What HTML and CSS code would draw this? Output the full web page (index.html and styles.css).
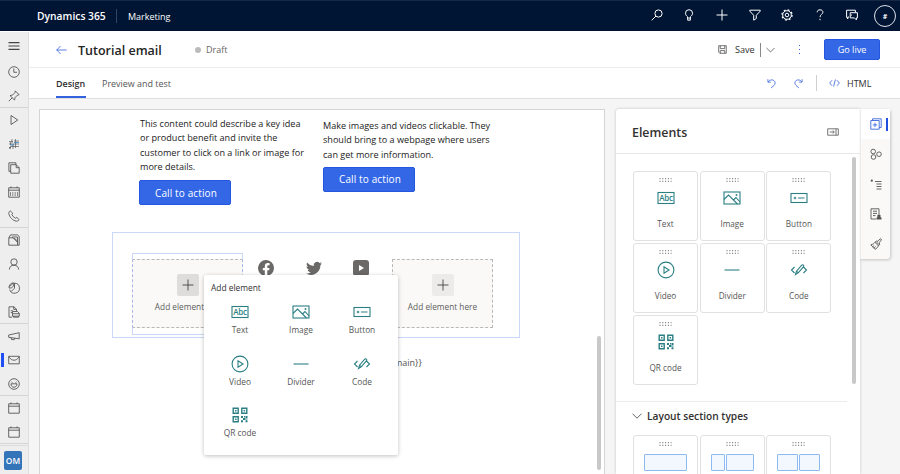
FILE: index.html
```html
<!DOCTYPE html>
<html lang="en">
<head>
<meta charset="utf-8">
<title>Tutorial email - Marketing</title>
<link rel="stylesheet" href="styles.css">
</head>
<body>
<svg class="defs" width="0" height="0">
  <symbol id="i-text" viewBox="0 0 18 14"><rect x="1" y="1.5" width="16" height="11"/><text x="9" y="10" text-anchor="middle" class="abc">Abc</text></symbol>
  <symbol id="i-image" viewBox="0 0 18 14"><rect x="1" y="1" width="16" height="12"/><path d="M1 8.500l4.500-4.500 9 9M10.500 9l2.500-2.500 4 4.500"/><circle cx="13.500" cy="4" r=".4"/></symbol>
  <symbol id="i-button" viewBox="0 0 18 14"><rect x="1" y="2.500" width="16" height="9"/><path d="M8 7h6.500M3.700 7h2.600M5 5.700v2.600"/></symbol>
  <symbol id="i-video" viewBox="0 0 18 18"><circle cx="9" cy="9" r="7.900"/><path d="M7 5.800v6.400L12 9z"/></symbol>
  <symbol id="i-divider" viewBox="0 0 18 14"><path d="M1.500 7h15"/></symbol>
  <symbol id="i-code" viewBox="0 0 18 14"><path d="M4.500 4L1.500 7l3 3M13.500 4l3 3-3 3M5.500 11.500l1-3.300 5.200-6c1.200-1 2.700.3 1.700 1.700l-5.200 6zM6.500 8.200l1.800 1.600"/></symbol>
  <symbol id="i-qr" viewBox="0 0 16 16"><path d="M1.200 1.200h5v5h-5zM9.800 1.200h5v5h-5zM1.200 9.800h5v5h-5z" class="w14"/><path class="f" d="M3 3h1.500v1.500H3zM11.600 3h1.500v1.500h-1.500zM3 11.600h1.500v1.500H3zM9 9h2v2H9zM13.500 9h2v2h-2zM11 11h2.500v2H11zM9 13.300h2v2H9zM13.500 13.300h2v2h-2zM12 9h1v1.500h-1zM14 11.500h1.500v1H14z"/></symbol>
  <symbol id="i-cal" viewBox="0 0 12 12"><path d="M.7 1.800h10.600v9.400H.7zM.7 4.200h10.600M3 .5v1.500M9 .5v1.500"/></symbol>
  <symbol id="i-grip" viewBox="0 0 14 6"><path d="M.5 1.500h13M.5 4.500h13"/></symbol>
  <symbol id="i-plus" viewBox="0 0 12 12"><path d="M6 .5v11M.5 6h11"/></symbol>
  <symbol id="i-chev" viewBox="0 0 10 6"><path d="M.5.700L5 5.200 9.500.700"/></symbol>
</svg>

<header class="topbar">
  <strong class="product">Dynamics 365</strong>
  <span class="app">Marketing</span>
  <nav class="tools">
    <svg viewBox="0 0 12 12"><circle cx="7.500" cy="4.500" r="3.600"/><path d="M5 7L.7 11.300"/></svg>
    <svg viewBox="0 0 12 12"><path d="M4.500 9V7.700C3.500 6.700 2.500 6 2.500 4.200a3.500 3.500 0 017 0c0 1.800-1 2.500-2 3.500V9zM4.700 9v2.200h2.600V9"/></svg>
    <svg viewBox="0 0 12 12"><use href="#i-plus"/></svg>
    <svg viewBox="0 0 12 12"><path d="M.8 1.200h10.400v.9L7.300 6.300v3.200l-2.600 1.700V6.300L.8 2.100z"/></svg>
    <svg viewBox="0 0 12 12"><circle cx="6" cy="6" r="4.300"/><circle cx="6" cy="6" r="1.800"/><circle class="teeth" cx="6" cy="6" r="5.100"/></svg>
    <svg viewBox="0 0 12 12"><path d="M3.200 3.300C3.200 1.600 4.300.8 6 .8s2.900 1 2.900 2.400C8.900 5.200 6 5.500 6 8.200M6 9.800v1.400"/></svg>
    <svg viewBox="0 0 12 12"><path d="M3 8H1.800v2L.6 8V1.200h8.800v2M4.200 3.700h7.200v5.200h-1v2l-2-2H4.200zM6 5.600L4.500 7"/></svg>
    <span class="avatar">#</span>
  </nav>
</header>

<div class="app-body">
  <aside class="sidebar">
    <div class="item first"><svg viewBox="0 0 12 12"><path d="M.5 2.700h11M.5 6h11M.5 9.300h11" class="bold"/></svg></div>
    <div class="item"><svg viewBox="0 0 12 12"><circle cx="6" cy="6" r="5.300"/><path d="M5.800 2.500v3.800H9"/></svg></div>
    <div class="item end"><svg viewBox="0 0 12 12"><path d="M.8 11.200l3.400-3.400M2 5.600l4.500 4.400.6-2.500 2.400-2.400 1.600-.3L7.300.9 7 2.600 4.600 5z"/></svg></div>
    <div class="item"><svg viewBox="0 0 12 12"><path d="M3 1.500v9L9.800 6z"/></svg></div>
    <div class="item"><svg viewBox="0 0 12 12"><path class="faint" d="M1 3.500h4M6 3h5M1 6h10M2 8.500h9M4 1v4M7.500 1v9M5 6v5M2.500 4v3"/><path class="accent" d="M6 4.500h5M2 7h4"/><path d="M1 9.800h2" class="bold"/></svg></div>
    <div class="item"><svg viewBox="0 0 12 12"><path d="M2.500 9.300H.9V.8h7v1.700M2.700 2.700h5.500l3 3v5.500H2.700zM8.200 2.700v3h3"/></svg></div>
    <div class="item"><svg viewBox="0 0 12 12"><use href="#i-cal"/><path d="M2.500 6v4M4.800 6v4M7.200 6v4M9.500 6v4" class="faint"/></svg></div>
    <div class="item end"><svg viewBox="0 0 12 12"><path d="M2.300.9c-1 .4-1.600 1.300-1.500 2.500.4 3.500 4 7.300 7.600 7.800 1.200 0 2-.5 2.700-1.600L8.800 7.400l-1.300.9c-1.600-.8-2.700-2-3.600-3.700l.8-1.400z"/></svg></div>
    <div class="item"><svg viewBox="0 0 12 12"><path d="M.8 3.800l1.700-2.900h7l1.700 1.500v8.800H.8zM1 3.800h4l4.500 4.500M4 3h5.500v8M6 4l3.500 3"/></svg></div>
    <div class="item"><svg viewBox="0 0 12 12"><circle cx="6" cy="4" r="3.200"/><path d="M1.400 11.500c0-2.800 2-4.300 4.600-4.300s4.600 1.500 4.600 4.300"/></svg></div>
    <div class="item"><svg viewBox="0 0 12 12"><path d="M6.500 1.200a5 5 0 11-4.800 6.500M1 6C.8 3 3 .8 5.700.8V4L3.200 6zM6.500 1.200v5L3 9.700M1.500 4.500L5 1.500"/></svg></div>
    <div class="item end"><svg viewBox="0 0 12 12"><path d="M4 11.200H1V.8h5l2.500 2.400V5M5.700.8v2.600h2.800M2.800 4.700h2M2.800 6.600h1.500M4.500 5.500h5l1.800 1.700v3H4.500zM5.500 10.200v1h5v-1M5 7.700h6"/></svg></div>
    <div class="item"><svg viewBox="0 0 12 12"><path d="M.7 5v2.300l10.500 1.500V2.700zM3 7.600l.6 2h2.700l.5-1.500"/></svg></div>
    <div class="item active"><svg viewBox="0 0 12 12"><path d="M.7 2.300h10.600v7.500H.7zM.7 2.800C3 5.800 4.500 6.200 6 6.200s3-.4 5.300-3.400"/></svg></div>
    <div class="item end"><svg viewBox="0 0 12 12"><circle cx="6" cy="6" r="5.300"/><path d="M3 5.800h6C9 8 7.800 9.200 6 9.200S3 8 3 5.800M3.500 4l1 .5M8.500 4l-1 .5"/></svg></div>
    <div class="item"><svg viewBox="0 0 12 12"><use href="#i-cal"/></svg></div>
    <div class="item end"><svg viewBox="0 0 12 12"><use href="#i-cal"/></svg></div>
    <div class="area"><span>OM</span></div>
  </aside>

  <main class="main">
    <div class="titlebar">
      <svg class="back" viewBox="0 0 12 10"><path d="M5 .7L.7 5 5 9.300M.7 5h11"/></svg>
      <h1>Tutorial email</h1>
      <span class="dot"></span><span class="draft">Draft</span>
      <div class="actions">
        <svg class="disk" viewBox="0 0 10 10"><path d="M.8.800h8.400v8.400H2L.8 8zM2.500.800v3.200h5V.800M2.500 9.200V6.200h5v3"/></svg>
        <span class="save">Save</span><i class="split"></i>
        <svg class="chev" viewBox="0 0 10 6"><use href="#i-chev"/></svg>
        <span class="more"><i></i><i></i><i></i></span>
        <button class="golive">Go live</button>
      </div>
    </div>
    <div class="tabs">
      <span class="tab on">Design</span>
      <span class="tab">Preview and test</span>
      <div class="edit">
        <svg viewBox="0 0 10 11"><path d="M1 .700V4h3.300M1.300 3.700C3 1.500 5.500.700 7.600 2.200c2 1.500 1.700 4 .2 5.400L4.500 10.500"/></svg>
        <svg class="redo" viewBox="0 0 10 11"><path d="M9 .700V4H5.700M8.700 3.700C7 1.500 4.500.700 2.400 2.200c-2 1.500-1.700 4-.2 5.400L5.500 10.500"/></svg>
        <i></i>
        <svg class="tag" viewBox="0 0 12 10"><path d="M3.300 2L.7 5l2.600 3M8.700 2l2.600 3-2.600 3M7 1.200L5 8.800"/></svg>
        <span class="html">HTML</span>
      </div>
    </div>

    <div class="workspace">
      <section class="canvas">
        <div class="copy">
          <div class="col one">
            <p>This content could describe a key idea<br>or product benefit and invite the<br>customer to click on a link or image for<br>more details.</p>
            <a class="cta">Call to action</a>
          </div>
          <div class="col two">
            <p>Make images and videos clickable. They<br>should bring to a webpage where users<br>can get more information.</p>
            <a class="cta">Call to action</a>
          </div>
        </div>
        <div class="section">
          <div class="slot selected"><div class="drop"><b><svg viewBox="0 0 12 12"><use href="#i-plus"/></svg></b><span>Add element</span></div></div>
          <div class="social">
            <svg viewBox="0 0 16 16"><path d="M16 8a8 8 0 10-9.200 7.900v-5.600h-2V8h2V6.200c0-2 1.200-3.100 3-3.100.9 0 1.800.2 1.800.2v2h-1c-1 0-1.300.6-1.300 1.200V8h2.200l-.4 2.300H9.300v5.600A8 8 0 0016 8z"/></svg>
            <svg viewBox="0 0 16 16"><path d="M5 15c6 0 9.400-5 9.400-9.400v-.4L16 3.500l-1.900.5c.7-.4 1.200-1 1.400-1.800l-2 .8A3.300 3.300 0 007.800 6C5 5.900 2.700 4.600 1.100 2.600.2 4.200.7 6 2.100 7L.6 6.600c0 1.600 1.100 2.900 2.600 3.200l-1.500.1c.4 1.300 1.600 2.200 3.100 2.300-1.300 1-3 1.500-4.800 1.400C1.500 14.500 3.200 15 5 15z"/></svg>
            <svg viewBox="0 0 16 16"><path fill-rule="evenodd" d="M3 0h10a3 3 0 013 3v10a3 3 0 01-3 3H3a3 3 0 01-3-3V3a3 3 0 013-3zm3 5v6l5-3z"/></svg>
          </div>
          <div class="slot"><div class="drop"><b><svg viewBox="0 0 12 12"><use href="#i-plus"/></svg></b><span>Add element here</span></div></div>
        </div>
        <p class="merge">main}}</p>
        <span class="scroll"></span>

        <div class="popup">
          <h3>Add element</h3>
          <div class="picker">
            <div><svg class="el"><use href="#i-text"/></svg><span>Text</span></div>
            <div><svg class="el"><use href="#i-image"/></svg><span>Image</span></div>
            <div><svg class="el"><use href="#i-button"/></svg><span>Button</span></div>
            <div><svg class="el"><use href="#i-video"/></svg><span>Video</span></div>
            <div><svg class="el"><use href="#i-divider"/></svg><span>Divider</span></div>
            <div><svg class="el"><use href="#i-code"/></svg><span>Code</span></div>
            <div><svg class="el qr"><use href="#i-qr"/></svg><span>QR code</span></div>
          </div>
        </div>
      </section>

      <aside class="panel">
        <div class="panel-head"><h2>Elements</h2><svg viewBox="0 0 12 8"><path d="M.7.800h10.600v6.400H.7zM9 .800v6.400M2.700 4h4.500M5.700 2.500L7.300 4 5.700 5.500"/></svg></div>
        <div class="panel-body">
          <div class="cards">
            <div class="card"><svg class="grip"><use href="#i-grip"/></svg><svg class="el"><use href="#i-text"/></svg><span>Text</span></div>
            <div class="card"><svg class="grip"><use href="#i-grip"/></svg><svg class="el"><use href="#i-image"/></svg><span>Image</span></div>
            <div class="card"><svg class="grip"><use href="#i-grip"/></svg><svg class="el"><use href="#i-button"/></svg><span>Button</span></div>
            <div class="card"><svg class="grip"><use href="#i-grip"/></svg><svg class="el"><use href="#i-video"/></svg><span>Video</span></div>
            <div class="card"><svg class="grip"><use href="#i-grip"/></svg><svg class="el"><use href="#i-divider"/></svg><span>Divider</span></div>
            <div class="card"><svg class="grip"><use href="#i-grip"/></svg><svg class="el"><use href="#i-code"/></svg><span>Code</span></div>
            <div class="card"><svg class="grip"><use href="#i-grip"/></svg><svg class="el qr"><use href="#i-qr"/></svg><span>QR code</span></div>
          </div>
          <div class="layouts-head"><svg viewBox="0 0 10 6"><use href="#i-chev"/></svg><h3>Layout section types</h3></div>
          <div class="cards layouts">
            <div class="card"><svg class="grip"><use href="#i-grip"/></svg><div class="cols"><i></i></div></div>
            <div class="card"><svg class="grip"><use href="#i-grip"/></svg><div class="cols third"><i></i><i></i></div></div>
            <div class="card"><svg class="grip"><use href="#i-grip"/></svg><div class="cols"><i></i><i></i></div></div>
          </div>
          <span class="panel-scroll"></span>
        </div>
      </aside>

      <nav class="rail">
        <div class="on"><svg viewBox="0 0 12 12"><path d="M.8 2.500h8.400v8.700H.8zM2.500 2.500V.8h8.700v8.700h-2M5 4.700v4.400M2.800 6.900h4.400"/></svg></div>
        <div><svg viewBox="0 0 12 12"><circle cx="3.200" cy="3.500" r="2.300"/><circle cx="3.500" cy="9" r="2.300"/><circle cx="9" cy="6.200" r="2.300"/></svg></div>
        <div><svg viewBox="0 0 12 12"><path d="M5 3.500h6.500M6.500 6h5M6.500 8.500h5M6.500 11h5"/><circle class="f" cx="1.800" cy="2.700" r="1.100"/></svg></div>
        <div><svg viewBox="0 0 12 12"><path d="M6 11H1V.8h8V6M3 3.200h4M3 5.400h4M3 7.600h2.500"/><path class="f" d="M6.500 11.500V9.800l1-.8a1.700 1.700 0 112.900 0l1.100.8v1.700z"/></svg></div>
        <div><svg viewBox="0 0 12 12"><path d="M.8 6.800C2.800 6.500 4 5.500 5 4.300l3.400 3.600C7.600 9.300 6.800 10.500 5 11.300zM5 4.300l1.500-1.200 1.400.2L10 1c.8-.6 1.800.3 1.200 1.200L9.300 4.600l.3 1.600-1.200 1.700M2.500 8.700l1.700-1M3.900 10.200l1.700-1.600M6 3.500l3.200 3.300"/></svg></div>
      </nav>
    </div>
  </main>
</div>
</body>
</html>
```
FILE: styles.css
```css
* { box-sizing: border-box; }
body { margin: 0; width: 900px; height: 474px; overflow: hidden; font-family: "Open Sans", "Noto Sans", sans-serif; font-size: 9px; color: #323130; background: #f5f5f5; }
h1, h2, h3, p { margin: 0; font-weight: 600; }
svg { display: block; fill: none; stroke: currentColor; stroke-width: .9; flex: none; }
.defs { display: none; }
.f { fill: currentColor; stroke: none; }
.bold { stroke-width: 1.2; }
.w14 { stroke-width: 1.4; }
.faint { stroke-width: .6; }
.accent { stroke: #2f86c9; }
.abc { font: 600 8px "Open Sans", sans-serif; letter-spacing: -.3px; fill: currentColor; stroke: none; }

.topbar { height: 31px; background: #001433; border-top: 1px solid #152846; color: #fff; display: flex; align-items: center; padding-left: 37px; }
.product { font-size: 10.3px; font-weight: 600; width: 80px; border-right: 1px solid #34445f; }
.app { margin-left: 11px; font-size: 9px; font-weight: 500; }
.tools { margin-left: auto; display: flex; align-items: center; gap: 20.6px; padding-right: 4px; }
.tools svg { width: 12px; height: 12px; stroke-width: 1; margin: -2px 1px 0 -1px; }
.tools .teeth { stroke-width: 1.2; stroke-dasharray: 2 2; }
.avatar { width: 22px; height: 22px; margin-left: -6px; border: 1px solid #dfe3ea; border-radius: 50%; display: grid; place-items: center; font-size: 7px; font-weight: 700; }

.app-body { display: flex; height: 443px; border-top: 1px solid #fff; overflow: hidden; }
.sidebar { width: 29px; background: #eee; border-right: 1px solid #dedede; color: #444; }
.item { height: 24px; padding-left: 7.500px; padding-right: 3px; display: flex; align-items: center; }
.item svg { width: 12px; height: 12px; stroke-width: .8; }
.item.first { height: 28px; }
.item.end { border-bottom: 1px solid #d5d5d5; }
.item.active { background: linear-gradient(#1f50f5, #1f50f5) 1px 5px / 3px 14px no-repeat; }
.area { border-top: 1px solid #ddd; margin-top: 1px; padding: 5px 0 0 4px; }
.area span { display: grid; place-items: center; width: 18px; height: 19px; border-radius: 2px; background: #3474b9; color: #fff; font-size: 8.4px; font-weight: 600; }

.main { flex: 1; min-width: 0; display: flex; flex-direction: column; }
.titlebar { height: 36px; background: #fff; border-bottom: 1px solid #ececec; display: flex; align-items: center; padding-left: 27px; }
.back { width: 11px; height: 10px; color: #3a66dd; }
h1 { font-size: 12.5px; margin-left: 11px; padding-top: 2px; width: 83px; white-space: nowrap; color: #242424; }
.dot { width: 6px; height: 6px; border-radius: 50%; background: #bbb; margin-left: 34px; }
.draft { margin-left: 5px; color: #666; font-size: 9px; }
.actions { margin-left: auto; display: flex; align-items: center; padding-right: 20px; }
.disk { width: 9px; height: 9px; color: #555; }
.save { margin-left: 8px; font-size: 9.1px; width: 22px; font-weight: 500; }
.split { width: 1px; height: 14px; background: #888; margin: 0 5px 0 3px; }
.chev { width: 9px; height: 6px; color: #555; }
.more { display: grid; gap: 3px; margin-left: 24px; width: 2px; }
.more i { width: 1px; height: 1px; background: #3a66dd; }
.golive { margin-left: 23px; width: 56px; height: 21px; padding: 0; border: 1px solid #2456e0; border-radius: 2px; background: #3367e6; color: #fff; font: 500 9.1px "Open Sans", sans-serif; }
.tabs { height: 31px; background: #fff; border-bottom: 1px solid #e0e0e0; display: flex; padding-left: 27px; }
.tab { height: 30px; line-height: 31px; margin-right: 16px; color: #555; font-size: 8.95px; }
.tab.on { font-weight: 600; color: #323130; border-bottom: 2px solid #3462df; width: 30px; }
.edit { margin-left: auto; display: flex; align-items: center; padding-right: 28px; color: #3a66dd; }
.edit svg { width: 9px; height: 11px; margin-right: 18px; }
.edit svg.redo { margin-right: 13px; }
.edit i { width: 1px; height: 16px; background: #d0d0d0; margin-right: 12px; }
.edit svg.tag { width: 11px; height: 10px; margin-right: 7px; }
.html { color: #323130; width: 25px; }

.workspace { flex: 1; min-height: 0; display: flex; align-items: flex-start; padding: 10px 10px 0 10px; }
.canvas { flex: none; position: relative; width: 566px; height: 365px; background: #fff; border: 1px solid #d5d5d5; border-bottom: 0; }
.copy { display: flex; height: 122px; padding-left: 100px; }
.col { flex: none; width: 183px; padding-top: 7px; font-size: 9.08px; color: #222; white-space: nowrap; }
.col.two { padding-top: 9px; }
.col p { font-weight: 400; line-height: 14.3px; }
.cta { display: grid; place-items: center; width: 92px; height: 25px; margin: 6px 0 0 -1px; padding-left: 2px; border-radius: 2px; border: 1px solid #2456e0; background: #3367e6; color: #fff; font-size: 10px; font-weight: 500; letter-spacing: .12px; }
.two .cta { margin: 5px 0 0; }
.section { width: 408px; height: 106px; margin-left: 72px; border: 1px solid #cbd7f8; display: flex; align-items: flex-start; padding: 20px 26px 0 19px; }
.slot { flex: none; width: 101px; padding: 6px 0; }
.slot.selected { width: 111px; height: 82px; border: 1px solid #cbd7f8; padding: 5px 0; margin-right: 0; }
.drop { height: 69px; border: 1px dashed #b8b8b8; background: #faf9f8; display: flex; flex-direction: column; align-items: center; padding-top: 14px; color: #605e5c; font-size: 8.3px; }
.drop b { width: 22px; height: 22px; background: #edebe9; border-radius: 2px; display: grid; place-items: center; color: #444; }
.selected .drop { margin: 0 -1px; border-left-color: #a9b7e8; border-right-color: #a9b7e8; }
.selected .drop b { background: #dfdddc; }
.drop b svg { width: 12px; height: 12px; }
.drop span { margin-top: 5px; white-space: nowrap; }
.selected .drop span { margin-left: -16px; }
.social { flex: none; display: flex; gap: 31.500px; margin: 6.500px 0 0 15px; width: 134px; }
.social svg { width: 16px; height: 16px; fill: #6b6967; stroke: none; }
.merge { margin: 18.500px 0 0 354px; font-size: 9px; line-height: 12px; font-weight: 400; color: #555; }
.scroll { position: absolute; right: 3px; top: 226px; width: 4px; height: 134px; border-radius: 2px; background: #c8c8c8; }
.popup { position: absolute; left: 164px; top: 165px; width: 194px; height: 180px; background: #fff; border-radius: 2px; box-shadow: 0 1px 4px rgba(0,0,0,.25); }
.popup h3 { font-size: 8.4px; font-weight: 500; line-height: 14px; padding: 6px 0 0 7px; }
.picker { display: grid; grid-template-columns: repeat(3, 61px); grid-auto-rows: 51.700px; margin-left: 5.500px; padding-top: 8px; }
.picker div { display: flex; flex-direction: column; align-items: center; font-size: 8.3px; color: #555; }
.picker span { line-height: 12px; margin-top: 3px; }
.el { width: 18px; height: 18px; color: #2b7f83; stroke-width: 1.1; }
.qr { padding: 1px; }

.panel { flex: none; margin-left: 11px; width: 244px; height: 365px; background: #fff; border-radius: 3px 0 0 0; box-shadow: 0 0 3px rgba(0,0,0,.22); overflow: hidden; }
.panel-head { height: 45px; border-bottom: 1px solid #e8e8e8; display: flex; align-items: center; justify-content: space-between; padding: 2px 21px 0 16px; }
.panel-head svg { width: 12px; height: 8px; color: #666; margin-top: -1px; }
h2 { font-size: 12.4px; }
.panel-body { position: relative; }
.cards { display: grid; grid-template-columns: repeat(3, 65px); gap: 2px 1.700px; padding: 17px 0 0 17px; }
.card { height: 70px; border: 1px solid #e1e1e1; border-radius: 3px; display: flex; flex-direction: column; align-items: center; padding-top: 5px; font-size: 8.2px; color: #555; }
.card .el { margin-top: 5.500px; }
.card span { line-height: 12px; margin-top: 11.500px; }
.grip { width: 13px; height: 6px; color: #888; stroke-dasharray: 1.200 1.800; stroke-width: 1.200; }
.layouts-head { width: 231px; height: 34px; margin-top: 16px; border-top: 1px solid #ececec; display: flex; align-items: center; padding: 0 0 5px 16px; gap: 5px; }
.layouts-head svg { width: 10px; height: 6px; color: #555; }
.layouts-head h3 { font-size: 10.2px; }
.layouts { padding-top: 0; }
.cols { display: flex; gap: 1px; width: 43px; height: 17px; margin-top: 7px; }
.cols i { flex: 1; border: 1px solid #8dbaf0; background: #f2f8fe; border-radius: 1px; }
.cols.third i:first-child { flex: none; width: 14px; }
.panel-scroll { position: absolute; right: 4px; top: 3px; width: 4px; height: 227px; border-radius: 2px; background: #c8c8c8; }

.rail { flex: none; width: 30px; height: 150px; background: #faf9f8; box-shadow: 1px 1px 3px rgba(0,0,0,.2); border-left: 1px solid #ececec; border-radius: 0 3px 3px 0; color: #555; }
.rail div { height: 30px; display: flex; align-items: center; padding-left: 9px; }
.rail svg { width: 12px; height: 12px; }
.rail .on { background: linear-gradient(#1f50e0, #1f50e0) 25px 9px / 2px 13px no-repeat, #fff; color: #3a66dd; }
```
